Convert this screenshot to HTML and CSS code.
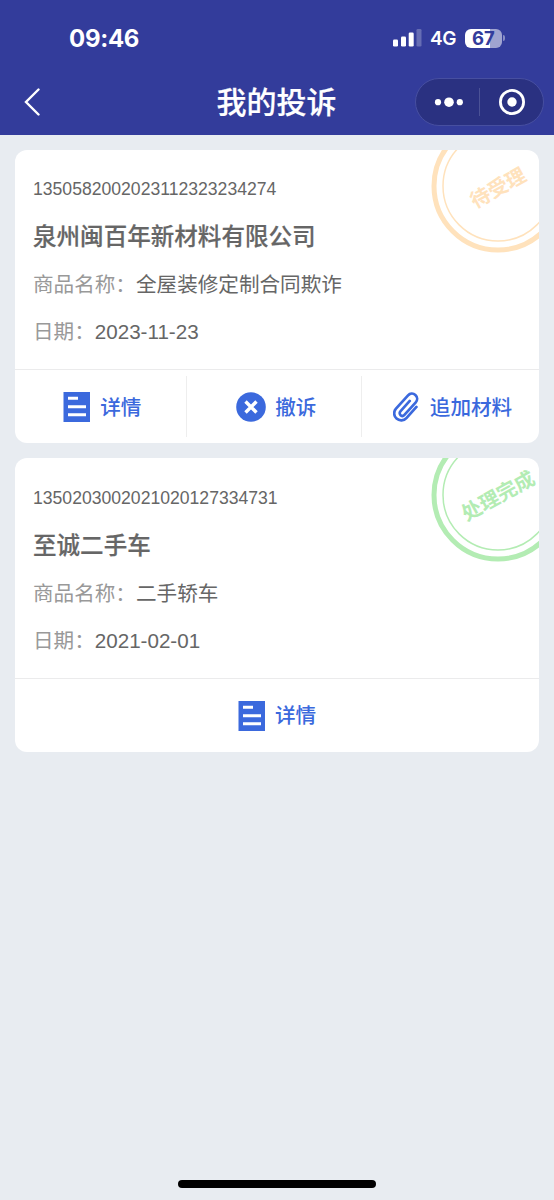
FILE: index.html
```html
<!DOCTYPE html>
<html lang="zh-CN">
<head>
<meta charset="utf-8">
<title>我的投诉</title>
<link rel="stylesheet" href="styles.css">
</head>
<body>
<svg class="defs" width="0" height="0">
  <symbol id="detail" viewBox="0 0 28 30">
    <path fill="#3b69dd" d="M.5 0h26.500v30H.5z"/>
    <path stroke="#fff" stroke-width="3" d="M5 6.300h10M5 14.700h18M5 22.800h18"/>
  </symbol>
</svg>
<header class="header">
  <div class="status">
    <span class="time">09:46</span>
    <div class="indicators">
      <svg class="signal" width="29" height="18" viewBox="0 0 29 18" fill="#fff">
        <rect x="0" y="10.5" width="5" height="7" rx="1.3"/>
        <rect x="8" y="7.5" width="5" height="10" rx="1.3"/>
        <rect x="15.7" y="3.5" width="5" height="14" rx="1.3"/>
        <rect x="23.5" y="0" width="5" height="17.5" rx="1.3" opacity=".25"/>
      </svg>
      <span class="network">4G</span>
      <span class="battery">67</span>
      <span class="battery-tip"></span>
    </div>
  </div>
  <nav class="nav">
    <svg class="back" width="18" height="28" viewBox="0 0 18 28"><path d="M15.500 1.500 3 14 15.500 26.500" fill="none" stroke="#fff" stroke-width="2.4" stroke-linecap="round"/></svg>
    <h1 class="nav-title">我的投诉</h1>
    <svg class="capsule" width="129" height="48" viewBox="0 0 129 48">
      <rect x=".5" y=".5" width="128" height="47" rx="23.5" fill="#2a3181" stroke="#474fa0"/>
      <path d="M64.500 10v28" stroke="#4b5296"/>
      <g fill="#fff"><circle cx="23" cy="24.2" r="3.1"/><circle cx="34" cy="24.2" r="4.8"/><circle cx="44.8" cy="24.2" r="3.1"/><circle cx="97" cy="24" r="4.7"/></g>
      <circle cx="97" cy="24" r="11.6" fill="none" stroke="#fff" stroke-width="2.8"/>
    </svg>
  </nav>
</header>
<main class="list">
  <article class="card">
    <svg class="stamp pending" width="134" height="134" viewBox="0 0 134 134">
      <circle cx="67" cy="67" r="64" stroke-width="5"/>
      <circle cx="67" cy="67" r="55" stroke-width="1.5"/>
      <text x="67" y="76" transform="rotate(-29 67 69)">待受理</text>
    </svg>
    <div class="info">
      <p class="number">1350582002023112323234274</p>
      <h2 class="company">泉州闽百年新材料有限公司</h2>
      <p class="row"><span class="label">商品名称：</span>全屋装修定制合同欺诈</p>
      <p class="row"><span class="label">日期：</span>2023-11-23</p>
    </div>
    <div class="actions split">
      <a class="action"><svg width="28" height="30"><use href="#detail"/></svg><span>详情</span></a>
      <a class="action"><svg width="30" height="30" viewBox="0 0 30 30"><circle cx="15" cy="15" r="14.8" fill="#3b69dd"/><path d="m9.500 9.500 11 11M20.500 9.500 9.500 20.500" stroke="#fff" stroke-width="3.4"/></svg><span>撤诉</span></a>
      <a class="action"><svg width="28" height="30" viewBox="0 0 28 30"><path transform="translate(8.2 21.4) rotate(-48)" d="M15 7H0A7 7 0 0 1 0-7H18A5.200 5.200 0 0 1 18 3.400H1A2.700 2.700 0 0 1 1-2H15" fill="none" stroke="#3b69dd" stroke-width="2.700" stroke-linecap="round"/></svg><span>追加材料</span></a>
    </div>
  </article>
  <article class="card">
    <svg class="stamp done" width="134" height="134" viewBox="0 0 134 134">
      <circle cx="67" cy="67" r="64" stroke-width="5"/>
      <circle cx="67" cy="67" r="55" stroke-width="1.5"/>
      <text x="67" y="75" transform="rotate(-29 67 68)">处理完成</text>
    </svg>
    <div class="info">
      <p class="number">1350203002021020127334731</p>
      <h2 class="company">至诚二手车</h2>
      <p class="row"><span class="label">商品名称：</span>二手轿车</p>
      <p class="row"><span class="label">日期：</span>2021-02-01</p>
    </div>
    <div class="actions">
      <a class="action"><svg width="28" height="30"><use href="#detail"/></svg><span>详情</span></a>
    </div>
  </article>
</main>
<footer class="home"><div class="home-bar"></div></footer>
</body>
</html>
```
FILE: styles.css
```css
* { box-sizing: border-box; }
body {
  margin: 0;
  height: 1200px;
  display: flex;
  flex-direction: column;
  background: #e8ecf1;
  color: #666;
  font-family: "Liberation Sans", "Noto Sans CJK SC", sans-serif;
}
h1, h2, p { margin: 0; }
.defs { position: absolute; }
.header { height: 134.5px; background: #333c9b; color: #fff; }
.status { height: 76px; padding: 0 49px 0 69px; display: flex; justify-content: space-between; align-items: center; }
.time { padding-top: 1px; font: 700 24px/30px Inter, sans-serif; letter-spacing: -.3px; }
.indicators { display: flex; align-items: center; }
.network { width: 27px; margin: 2px 8px 0 8.5px; font: 600 19px/22px Inter, sans-serif; letter-spacing: -.4px; }
.battery {
  width: 37px;
  height: 19px;
  border-radius: 6px;
  background: linear-gradient(90deg, #fff 67%, #a0a4d0 67%);
  color: #333c9b;
  font: 700 18.5px/19px Inter, sans-serif;
  text-align: center;
}
.battery-tip { width: 2px; height: 6px; margin-left: 1px; border-radius: 0 2px 2px 0; background: #898ec4; }
.nav { height: 52px; padding: 0 10px 0 23px; display: grid; grid-template-columns: 129px 1fr 129px; align-items: center; }
.nav-title { padding: 2px 14px 0 0; font-size: 30px; font-weight: 500; line-height: 44px; text-align: center; -webkit-text-stroke: .2px; }
.list { flex: 1; padding: 15px; display: flex; flex-direction: column; gap: 15px; }
.card { position: relative; height: 293.8px; display: flex; flex-direction: column; border-radius: 12px; background: #fff; overflow: hidden; }
.stamp { position: absolute; top: -30.5px; left: 416px; }
.stamp circle { fill: none; stroke: currentColor; }
.stamp text { fill: currentColor; font-size: 20px; font-weight: 700; text-anchor: middle; }
.pending { color: #ffe2bc; }
.done { color: #b3ecb3; }
.info { flex: 1; padding: 24.3px 18px 0; }
.number { font-size: 17.6px; line-height: 30px; }
.company { margin-top: 15.3px; font-size: 23.55px; font-weight: 500; line-height: 36px; -webkit-text-stroke: .2px; }
.row { margin-top: 15px; font-size: 20.6px; line-height: 32px; }
.company + .row { margin-top: 14px; }
.label { color: #999; }
.actions { height: 74px; padding: 6px 0; display: flex; border-top: 1.5px solid #ebebec; }
.action { flex: 1; display: flex; align-items: center; justify-content: center; gap: 9px; color: #3b69dd; font-size: 20.6px; font-weight: 500; line-height: 30px; }
.action span { padding-top: 1px; }
.split .action span { padding-top: 2px; }
.action + .action { border-left: 1px solid #eee; }
.split { display: grid; grid-template-columns: 170.5px 175.5px 1fr; }
.split .action:first-child { padding-left: 4px; }
.split .action:nth-child(2) { padding-left: 5px; }
.split .action:last-child { padding-left: 4px; }
.home { height: 20px; display: flex; justify-content: center; }
.home-bar { width: 198px; height: 8px; border-radius: 4px; background: #000; }
```
